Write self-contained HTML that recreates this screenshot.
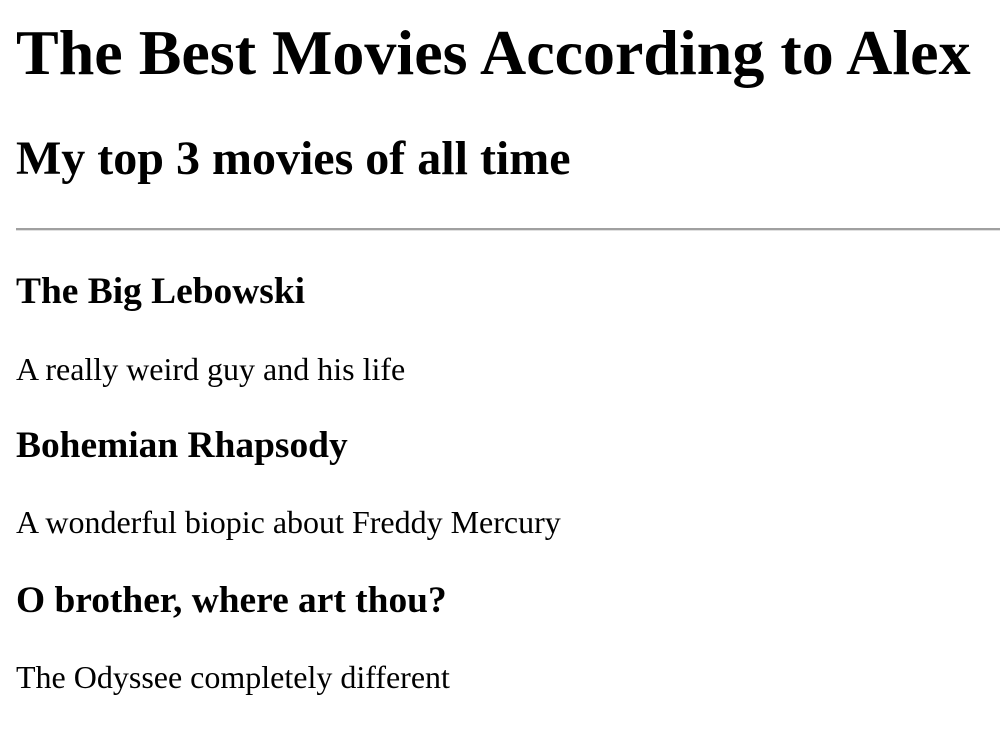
<!DOCTYPE html>
<html><head><meta charset="utf-8"><style>
html,body{margin:0;padding:0;background:#fff;width:1000px;height:730px;overflow:hidden}
body{font-family:"Liberation Serif","Times New Roman",serif;color:#000;position:relative}
div{position:absolute;left:16px;line-height:1;white-space:nowrap}
.h1{font-size:64px;font-weight:bold;top:21px}
.h2{font-size:48px;font-weight:bold;top:135px}
.h3{font-size:37.44px;font-weight:bold}
.p{font-size:32px}
.hr{left:16px;top:228px;width:984px;height:0;border-top:2px solid #a0a0a0;border-bottom:1px solid #e0e0e0}
</style></head><body>
<div class="h1">The Best Movies According to Alex</div>
<div class="h2">My top 3 movies of all time</div>
<div class="hr"></div>
<div class="h3" style="top:273px">The Big Lebowski</div>
<div class="p" style="top:353px">A really weird guy and his life</div>
<div class="h3" style="top:427px">Bohemian Rhapsody</div>
<div class="p" style="top:506px">A wonderful biopic about Freddy Mercury</div>
<div class="h3" style="top:582px">O brother, where art thou?</div>
<div class="p" style="top:661px">The Odyssee completely different</div>
</body></html>
